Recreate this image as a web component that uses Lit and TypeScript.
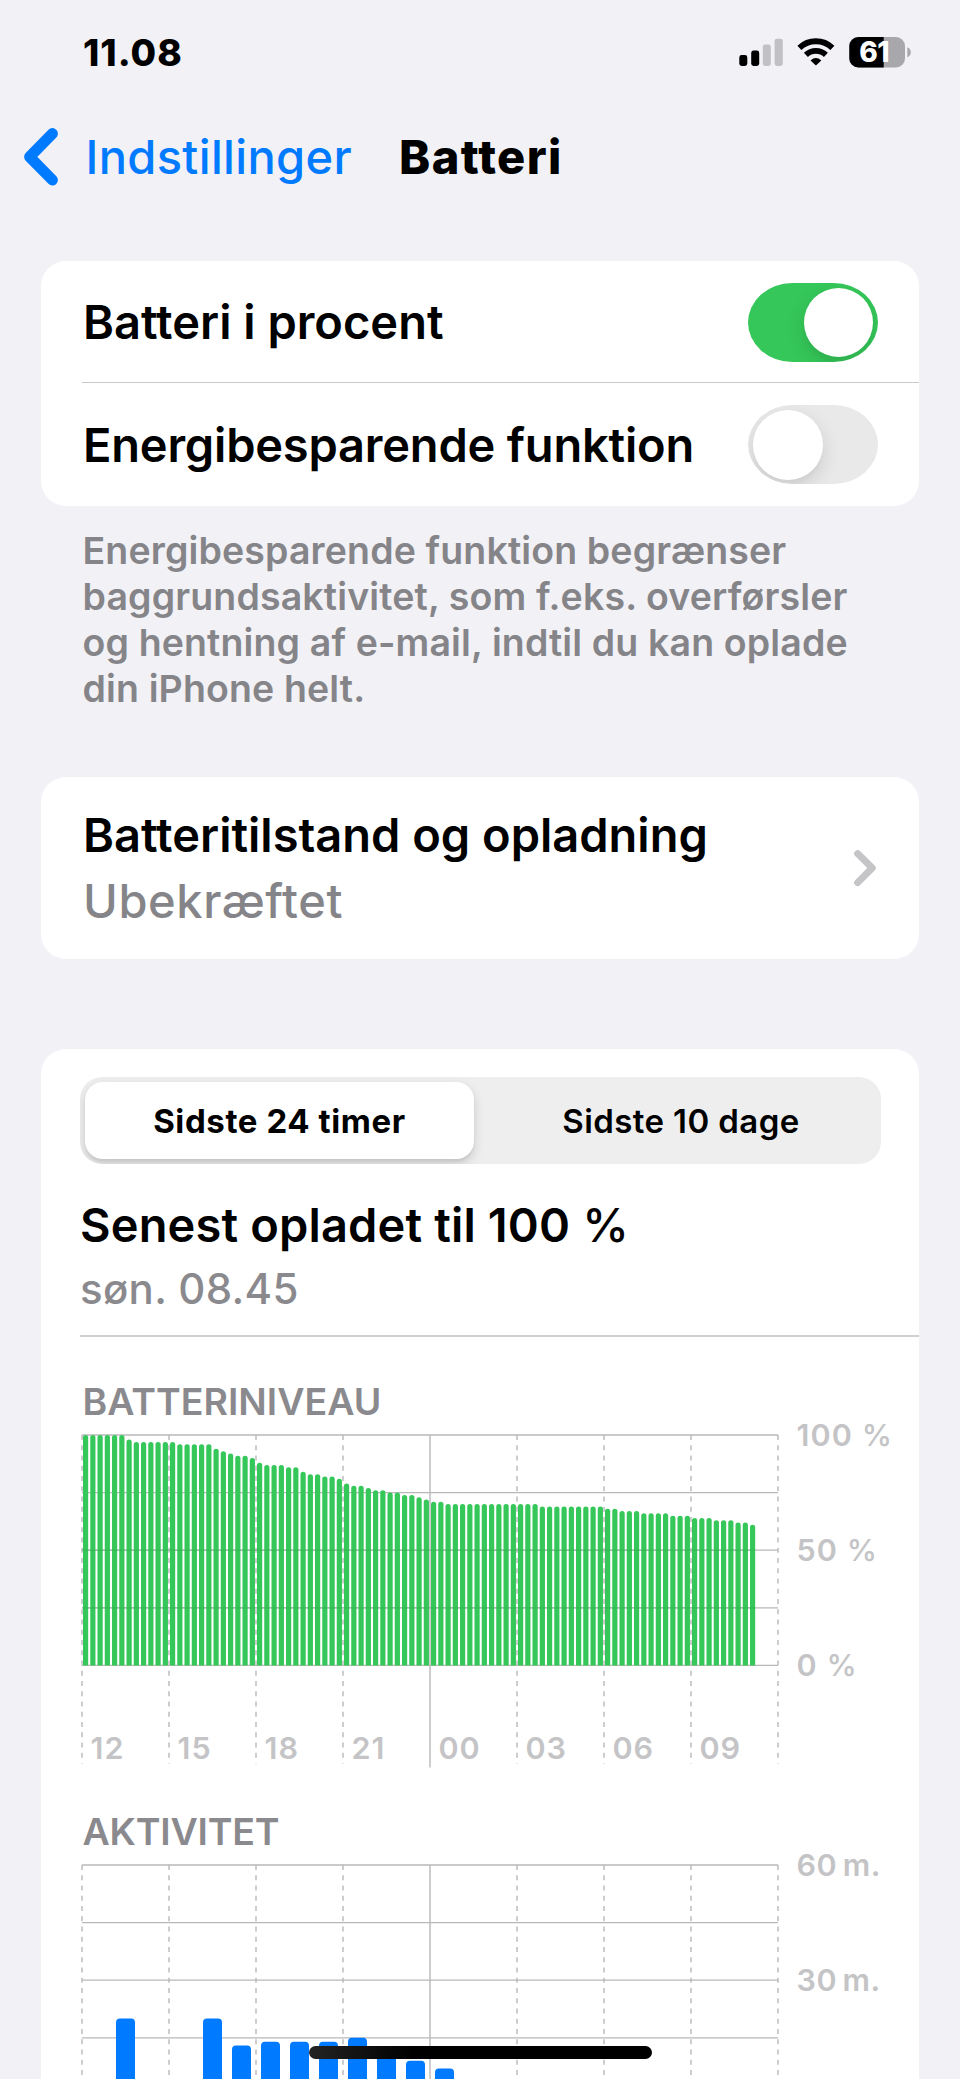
import { LitElement, html, svg, css } from "lit";
import { customElement } from "lit/decorators.js";

const runs: [number, number][] = [
  [100, 6], [98, 1], [97, 6], [96, 5], [94, 1], [93, 1], [92, 1], [91, 2], [90, 1],
  [88, 1], [87, 3], [86, 2], [84, 1], [83, 2], [82, 2], [81, 1], [79, 1], [78, 2],
  [77, 1], [76, 2], [75, 2], [74, 2], [73, 1], [72, 1], [71, 2], [70, 13], [69, 9],
  [68, 2], [67, 3], [66, 4], [65, 3], [64, 3], [63, 3], [62, 2], [61, 1],
];
const levels: number[] = runs.flatMap(([v, n]) => Array(n).fill(v));
const activity: [number, number][] = [
  [1, 20], [4, 20], [5, 13], [6, 14], [7, 14], [8, 14], [9, 15], [10, 11], [11, 9], [12, 7],
];
const hours = ["12", "15", "18", "21", "00", "03", "06", "09"];

// Plot geometry: 24 hours at 29px each, 230.4px tall.
const W = 696;
const H = 230.4;

@customElement("battery-chart")
class BatteryChart extends LitElement {
  static properties = { kind: {} };
  declare kind: string;
  static styles = css`
    :host { display: block; }
    svg { display: block; overflow: visible; }
    .h { stroke: #b8b8b8; stroke-width: 1.3; }
    .v { stroke: #b8b8b8; stroke-width: 1.4; stroke-dasharray: 5.1 5.15; }
    .solid { stroke-dasharray: none; }
    .level { fill: #35c759; }
    .act { fill: #007aff; }
    .over { stroke: #2f9e4c; stroke-opacity: 0.35; stroke-width: 1.2; }
  `;
  render() {
    const level = this.kind === "level";
    const tail = level ? 328.5 : 400;
    return html`<svg width="698" height=${level ? 334 : 215} viewBox="-1 -1 698 ${level ? 334 : 215}">
      ${[0, 1, 2, 3, 4].map((i) => svg`<line class="h" x1="0" x2=${W} y1=${(i * H) / 4} y2=${(i * H) / 4}/>`)}
      ${Array.from({ length: 9 }, (_, i) => svg`<line class="v ${i === 4 ? "solid" : ""}" x1=${i * 87} x2=${i * 87} y1="0" y2=${i === 4 ? tail + 4 : tail}/>`)}
      ${level
        ? levels.map((v, i) => {
            const x = 1 + i * 7.25;
            const y = H * (1 - v / 100);
            return svg`<path class="level" d="M${x} ${H}V${y + 2.6}a2.6 2.6 0 0 1 5.2 0V${H}z"/>`;
          })
        : activity.map(([h, m]) => {
            const x = h * 29 + 5;
            const y = H * (1 - m / 60);
            return svg`<path class="act" d="M${x} ${H}V${y + 4}q0 -4 4 -4h11q4 0 4 4V${H}z"/>`;
          })}
      ${level ? [2, 3].map((i) => svg`<line class="over" x1="0" x2="673" y1=${(i * H) / 4} y2=${(i * H) / 4}/>`) : ""}
    </svg>`;
  }
}

@customElement("app-root")
class AppRoot extends LitElement {
  static styles = css`
    :host {
      display: block; position: relative; width: 960px; height: 2079px; overflow: hidden;
      background: #f2f1f6; color: #000; font-family: Inter, "Liberation Sans", sans-serif;
      font-weight: 600; white-space: nowrap;
    }
    * { box-sizing: border-box; }
    .status { display: flex; height: 106px; padding: 0 49px 0 83px; justify-content: space-between; }
    .time { margin-top: 31px; font-size: 37px; line-height: 44px; font-weight: 800; letter-spacing: 1px; }
    .icons { margin-top: 30px; display: block; }
    .pct { font-size: 28px; font-weight: 800; fill: #fff; letter-spacing: -0.5px; }
    .nav { display: flex; height: 154.5px; padding-left: 20px; }
    .nav svg { margin-top: 18px; }
    .back, .title { font-size: 47px; line-height: 56px; margin-top: 23px; }
    .back { color: #007aff; margin-left: 22.5px; width: 313.5px; font-weight: 500; letter-spacing: 0.35px; }
    .title { font-weight: 800; letter-spacing: 1.4px; }
    .card { margin: 0 41px; background: #fff; border-radius: 25px; }
    .row { display: flex; align-items: center; justify-content: space-between; height: 123.5px; padding: 1px 41px 0 1px; margin-left: 41px; font-size: 47px; line-height: 56px; }
    .row:first-child { height: 121.5px; padding-top: 2px; }
    .row + .row { border-top: 1.5px solid #c9c9cb; letter-spacing: -0.2px; }
    .toggle { width: 130px; height: 79px; border-radius: 45px / 40px; padding: 5px; background: #e9e9ea; display: flex; overflow: hidden; }
    .on { background: #35c759; justify-content: flex-end; }
    .knob { width: 69.5px; height: 69.5px; border-radius: 50%; background: #fff; box-shadow: 0 7px 20px rgba(0,0,0,.12), 0 6px 3px rgba(0,0,0,.02); }
    .note { margin: 22px 0 0 82.5px; height: 249.5px; font-size: 37.5px; line-height: 46.3px; letter-spacing: 0.13px; color: #858589; }
    .health { display: flex; height: 181.5px; justify-content: space-between; padding: 28.5px 42px 0 42px; font-size: 47px; }
    .health svg { margin-top: 42.5px; }
    .l1 { line-height: 58px; }
    .l2 { line-height: 56px; margin-top: 9px; font-size: 47px; font-weight: 500; letter-spacing: 0.6px; color: #858589; }
    .usage { margin-top: 90.5px; height: 1100px; border-radius: 25px 25px 0 0; padding: 28px 0 0 39px; }
    .seg { display: flex; width: 801px; height: 87px; border-radius: 22px; background: #eeeeef; padding: 5px; font-size: 33px; overflow: hidden; }
    .seg div { flex: 1; display: flex; align-items: center; justify-content: center; }
    .seg .sel { flex: 0 0 389px; background: #fff; border-radius: 18px; font-weight: 700; letter-spacing: 0.6px; box-shadow: 0 5px 12px rgba(0,0,0,.14), 0 3px 3px rgba(0,0,0,.06); }
    .seg .alt { font-weight: 600; letter-spacing: 0.4px; padding-left: 12px; }
    .last { margin-top: 31.5px; font-size: 47px; line-height: 58px; letter-spacing: 0.15px; }
    .thin { font-weight: 500; }
    .when { font-size: 42px; line-height: 52px; margin-top: 9.5px; color: #8a8a8e; font-weight: 500; letter-spacing: 0.3px; }
    .rule { height: 1.5px; background: #d0d0d2; margin-top: 20px; }
    .head { font-size: 37.5px; line-height: 44px; color: #8a8a8e; margin-left: 2.5px; }
    .h1 { margin-top: 43px; }
    .h2 { margin-top: 42px; letter-spacing: -0.2px; }
    .plot { display: grid; grid-template-columns: 698px 1fr; column-gap: 17.5px; margin-left: 1px; margin-top: 10px; }
    .h1 + .plot { margin-top: 10.5px; }
    .plot battery-chart { grid-area: 1 / 1; }
    .axis { grid-area: 1 / 2; font-size: 30.5px; font-weight: 600; letter-spacing: 1.1px; color: #c4c4c6; margin-top: -17px; height: 0; }
    .mins { letter-spacing: 0.5px; }
    .axis > div { height: 115.2px; line-height: 36px; }
    .hours { grid-area: 1 / 1; align-self: end; display: grid; grid-template-columns: repeat(8, 87px); font-size: 30.5px; font-weight: 600; line-height: 36px; letter-spacing: 1px; color: #c4c4c6; padding: 0 0 2.5px 9.5px; }
    .home { position: absolute; left: 309px; top: 2045.5px; width: 343px; height: 13px; border-radius: 7px; background: linear-gradient(90deg, #242424, #000 30%); }
  `;
  render() {
    return html`
      <div class="status">
        <div class="time">11.08</div>
        <svg class="icons" width="174" height="40" viewBox="737 30 174 40">
          <rect x="739.3" y="55" width="8" height="11" rx="2.4"/>
          <rect x="751.2" y="50.6" width="8" height="15.4" rx="2.4"/>
          <rect x="762.8" y="44.6" width="8" height="21.4" rx="2.4" fill="#c1c0c5"/>
          <rect x="774.6" y="38.8" width="8.2" height="27.2" rx="2.4" fill="#c1c0c5"/>
          <g fill="none" stroke="#000" stroke-width="5.8">
            <path d="M799.4 47.8a24 24 0 0 1 33 0"/>
            <path d="M805.9 54.8a14.6 14.6 0 0 1 20 0"/>
          </g>
          <path d="M815.9 65.6l-5.4-5.2q5.4-4.8 10.8 0z"/>
          <clipPath id="b"><rect x="849.3" y="37" width="55.7" height="30.5" rx="9"/></clipPath>
          <g clip-path="url(#b)"><rect x="849" y="37" width="57" height="31" fill="#a8a7ac"/><rect x="849" y="37" width="34.7" height="31"/></g>
          <path d="M907.3 47.2q3.5 1.4 3.5 5t-3.5 5z" fill="#a8a7ac"/>
          <text class="pct" x="859.3" y="62.2">61</text>
        </svg>
      </div>
      <div class="nav">
        <svg width="43" height="66" viewBox="20 124 43 66"><path d="M52.4 133.6L29.6 156.8L52.4 180" fill="none" stroke="#007aff" stroke-width="11" stroke-linecap="round" stroke-linejoin="round"/></svg>
        <div class="back">Indstillinger</div>
        <div class="title">Batteri</div>
      </div>
      <div class="card">
        <div class="row"><span>Batteri i procent</span><div class="toggle on"><div class="knob"></div></div></div>
        <div class="row"><span>Energibesparende funktion</span><div class="toggle"><div class="knob"></div></div></div>
      </div>
      <div class="note">Energibesparende funktion begrænser<br>baggrundsaktivitet, som f.eks. overførsler<br>og hentning af e-mail, indtil du kan oplade<br>din iPhone helt.</div>
      <div class="card health">
        <div><div class="l1">Batteritilstand og opladning</div><div class="l2">Ubekræftet</div></div>
        <svg width="24" height="40" viewBox="853 848 24 40"><path d="M857.6 853.6L872.2 868L857.6 882.6" fill="none" stroke="#c5c5c7" stroke-width="7" stroke-linecap="round" stroke-linejoin="round"/></svg>
      </div>
      <div class="card usage">
        <div class="seg"><div class="sel">Sidste 24 timer</div><div class="alt">Sidste 10 dage</div></div>
        <div class="last">Senest opladet til 100 <span class="thin">%</span></div>
        <div class="when">søn. 08.45</div>
        <div class="rule"></div>
        <div class="head h1">BATTERINIVEAU</div>
        <div class="plot">
          <battery-chart .kind=${"level"}></battery-chart>
          <div class="hours">${hours.map((h) => html`<span>${h}</span>`)}</div>
          <div class="axis">${["100", "50", "0"].map((p) => html`<div>${p} <span class="thin">%</span></div>`)}</div>
        </div>
        <div class="head h2">AKTIVITET</div>
        <div class="plot">
          <battery-chart .kind=${"activity"}></battery-chart>
          <div class="axis mins"><div>60&#8198;m.</div><div>30&#8198;m.</div></div>
        </div>
      </div>
      <div class="home"></div>
    `;
  }
}
